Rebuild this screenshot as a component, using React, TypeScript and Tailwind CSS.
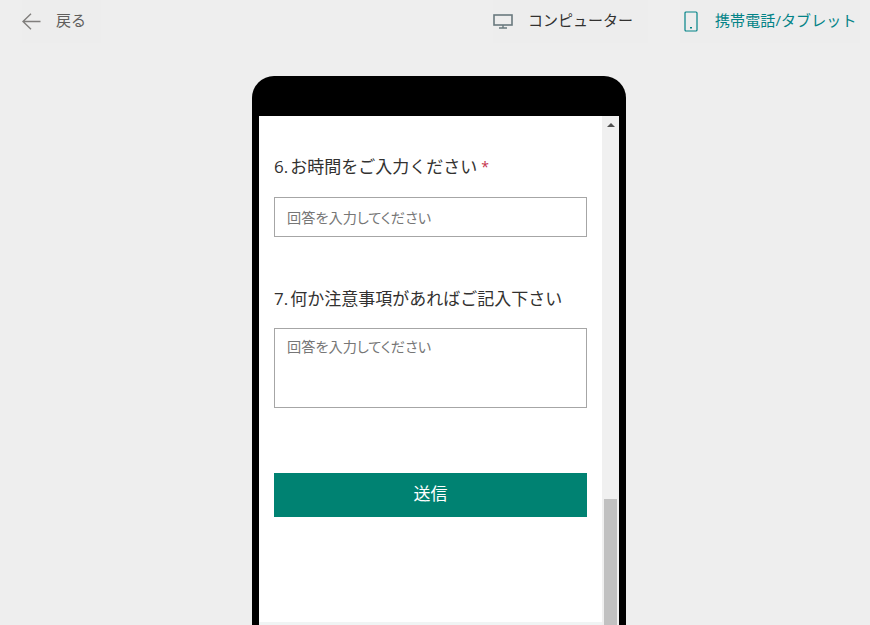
import React from 'react';

const font = "font-['Open_Sans','Noto_Sans_CJK_JP',sans-serif]";

const App: React.FC = () => {
  return (
    <div className={`h-[625px] w-[870px] overflow-hidden bg-[#eeeeee] ${font}`}>
      {/* ツールバー */}
      <div className="flex h-[76px] items-start justify-between pl-[22px] pr-[10px]">
        <button className="flex h-[43px] w-[79px] items-center bg-[#ededed] text-[15px] text-[#605e5c]">
          <svg width="19" height="17" viewBox="0 0 19 17" fill="none" stroke="#807e7c" strokeWidth="1.4" className="shrink-0">
            <path d="M18.5 8.5H1M9 .7 1 8.5l8 7.8" />
          </svg>
          <span className="mb-[2px] ml-[15px]">戻る</span>
        </button>
        <div className="flex">
          <button className="flex h-[43px] w-[155px] items-center bg-[#ededed] text-[15px] text-[#323130]">
            <svg width="20" height="15" viewBox="0 0 20 15" fill="none" className="shrink-0">
              <rect x="1" y="1" width="18" height="10" stroke="#69797e" strokeWidth="1.6" />
              <path d="M10 11v3M6 14h8" stroke="#69797e" strokeWidth="1.4" />
            </svg>
            <span className="mb-[2px] ml-[15px]">コンピューター</span>
          </button>
          <button className="ml-[32px] flex h-[43px] w-[180px] items-center bg-[#ededed] pl-[4px] text-[15px] text-[#038387]">
            <svg width="14" height="21" viewBox="0 0 14 21" fill="none" className="shrink-0">
              <rect x="1" y="1" width="12" height="19" rx="1" stroke="#038387" strokeWidth="1.2" />
              <rect x="6" y="16" width="2" height="1.5" fill="#038387" />
            </svg>
            <span className="mb-[2px] ml-[17px] whitespace-nowrap tracking-[0.1px]">携帯電話/タブレット</span>
          </button>
        </div>
      </div>

      {/* 端末フレーム */}
      <div className="ml-[252px] h-[600px] w-[374px] rounded-t-[22px] bg-black px-[7px] pt-[40px]">
        <div className="flex h-[560px] bg-white">
          <div className="w-[343px] text-[#323130]">
            <div className="h-[506px] pl-[15px] pr-[15px] pt-[40px]">
              <div className="flex h-[22px] items-center text-[17px] leading-[22px]">
                <span>6.</span>
                <span className="ml-[2px]">お時間をご入力ください</span>
                <span className="ml-[4px] text-[14px] text-[#c4314b]">*</span>
              </div>
              <input
                placeholder="回答を入力してください"
                className="mt-[19px] block h-[40px] w-[313px] border border-[#a6a6a6] px-[12px] text-[14.2px] outline-none [font-feature-settings:'palt'] placeholder:text-[#767676]"
              />
              <div className="mt-[50px] flex h-[22px] items-center pt-[2px] text-[17px] leading-[22px]">
                <span>7.</span>
                <span className="ml-[2px]">何か注意事項があればご記入下さい</span>
              </div>
              <textarea
                placeholder="回答を入力してください"
                className="mt-[19px] block h-[80px] w-[313px] resize-none overflow-hidden border border-[#a6a6a6] px-[12px] py-[8px] text-[14.2px] leading-[20px] outline-none [font-feature-settings:'palt'] placeholder:text-[#767676]"
              />
              <button className="mt-[65px] block h-[44px] w-[313px] bg-[#008272] pb-[3px] text-[17px] text-white">送信</button>
            </div>
            <div className="h-[54px] bg-[#f0f4f4]" />
          </div>
          {/* スクロールバー */}
          <div className="flex w-[17px] flex-col items-center bg-[#f0f0f0]">
            <div className="mt-[7px] h-0 w-0 border-x-[4px] border-b-[4px] border-x-transparent border-b-[#505050]" />
            <div className="mt-[372px] h-[170px] w-[13px] bg-[#c1c1c1]" />
          </div>
        </div>
      </div>
    </div>
  );
};

export default App;
